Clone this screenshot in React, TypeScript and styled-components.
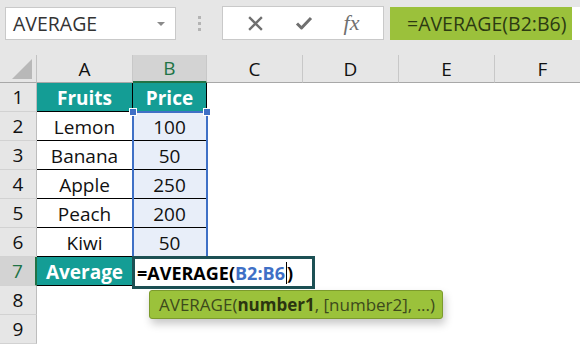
import React from "react";
import styled, { createGlobalStyle } from "styled-components";

const Global = createGlobalStyle`
  html, body { margin: 0; padding: 0; background: #fff; }
  body { width: 580px; height: 344px; overflow: hidden; font-family: "Open Sans", "Noto Sans", sans-serif; }
`;

const Page = styled.div`
  width: 580px;
  height: 344px;
  overflow: hidden;
  display: flex;
  flex-direction: column;
  background: #fff;
`;

const TopBar = styled.div`
  height: 56px;
  box-sizing: border-box;
  background: #e6e6e6;
  display: flex;
  align-items: flex-start;
  padding: 7px 0 0 5px;
`;

const NameBox = styled.div`
  width: 171px;
  height: 33px;
  box-sizing: border-box;
  background: #fff;
  border: 1px solid #c9c9c9;
  display: flex;
  align-items: center;
  justify-content: space-between;
  padding: 0 10px 0 7px;
  font-size: 19.5px;
  color: #333;
`;

const Caret = styled.span`
  width: 0;
  height: 0;
  border-left: 4px solid transparent;
  border-right: 4px solid transparent;
  border-top: 4px solid #8a8a8a;
`;

const Grip = styled.div`
  width: 46px;
  height: 33px;
  display: flex;
  flex-direction: column;
  align-items: center;
  justify-content: center;
  gap: 3px;
  & > span { width: 3px; height: 3px; background: #b4b4b4; }
`;

const FxBox = styled.div`
  width: 162px;
  height: 34px;
  margin-top: -1px;
  box-sizing: border-box;
  background: #fff;
  border: 1px solid #c9c9c9;
  display: flex;
  align-items: center;
  justify-content: space-around;
  padding: 0 8px;
  margin-right: 6px;
  color: #6f6f6f;
`;

const Fx = styled.span`
  font-family: "Liberation Serif", "DejaVu Serif", serif;
  font-style: italic;
  font-size: 22px;
  color: #707070;
  line-height: 1;
`;

const FormulaBox = styled.div`
  flex: 1;
  height: 33px;
  background: #fff;
  display: flex;
`;

const FormulaHighlight = styled.div`
  width: 182px;
  height: 100%;
  background: #9bc13b;
  color: #2c3a12;
  font-size: 19.5px;
  display: flex;
  align-items: center;
  padding-left: 17px;
  box-sizing: border-box;
  white-space: nowrap;
`;

const Sheet = styled.div`
  position: relative;
  flex: 1;
  display: grid;
  grid-template-columns: 37px 96px 74px 96px 96px 96px 96px;
  grid-template-rows: 28px;
  grid-auto-rows: 29px;
  font-size: 18px;
`;

const ColHead = styled.div<{ $active?: boolean; $corner?: boolean }>`
  box-sizing: border-box;
  background: ${(p) => (p.$active ? "#d3d3d3" : "#e6e6e6")};
  color: ${(p) => (p.$active ? "#217346" : "#111")};
  border-right: 1px solid ${(p) => (p.$corner ? "#c2c2c2" : "#c8c8c8")};
  border-bottom: ${(p) => (p.$active ? "2px solid #217346" : "1px solid #a8a8a8")};
  display: flex;
  align-items: center;
  justify-content: center;
  position: relative;
  font-size: 19px;
`;

const Triangle = styled.span`
  position: absolute;
  right: 4px;
  bottom: 3px;
  width: 0;
  height: 0;
  border-left: 20px solid transparent;
  border-bottom: 20px solid #b8b8b8;
`;

const RowHead = styled.div<{ $active?: boolean }>`
  box-sizing: border-box;
  background: ${(p) => (p.$active ? "#d3d3d3" : "#e6e6e6")};
  color: ${(p) => (p.$active ? "#217346" : "#111")};
  border-bottom: 1px solid #d2d2d2;
  border-right: ${(p) => (p.$active ? "2px solid #217346" : "1px solid #bdbdbd")};
  display: flex;
  align-items: center;
  justify-content: center;
  font-size: 19px;
`;

type Kind = "head" | "text" | "sel" | "blank";

const Cell = styled.div<{ $kind: Kind }>`
  box-sizing: border-box;
  display: flex;
  align-items: center;
  justify-content: center;
  white-space: nowrap;
  font-size: 19px;
  padding-top: 1px;
  color: #111;
  background: ${(p) =>
    p.$kind === "head" ? "#149d95" : p.$kind === "sel" ? "#e8eef9" : "#fff"};
  font-weight: ${(p) => (p.$kind === "head" ? 700 : 400)};
  ${(p) => p.$kind === "head" && "color: #fff;"}
  ${(p) =>
    p.$kind !== "blank" &&
    "border-right: 1px solid #000; border-bottom: 1px solid #000;"}
`;

const Selection = styled.div`
  position: absolute;
  left: 132px;
  top: 56px;
  width: 76px;
  height: 147px;
  box-sizing: border-box;
  border: 2px solid #3f70c6;
  pointer-events: none;
`;

const Handle = styled.span<{ $side: "left" | "right" }>`
  position: absolute;
  top: -5px;
  ${(p) => (p.$side === "left" ? "left: -5px;" : "right: -5px;")}
  width: 6px;
  height: 6px;
  background: #3f70c6;
  border: 1px solid #fff;
`;

const EditBox = styled.div`
  position: absolute;
  left: 132px;
  top: 201px;
  width: 183px;
  height: 33px;
  box-sizing: border-box;
  border: 3px solid #1c5054;
  background: #fff;
  display: flex;
  align-items: center;
  padding-left: 2px;
  font-size: 18px;
  font-weight: 700;
  color: #000;
  white-space: nowrap;
`;

const Ref = styled.span`
  color: #3f70c6;
`;

const Caret2 = styled.span`
  display: inline-block;
  width: 1px;
  height: 22px;
  background: #000;
  margin: 0 0 0 1px;
`;

const Tip = styled.div`
  position: absolute;
  left: 149px;
  top: 235px;
  width: 294px;
  height: 29px;
  box-sizing: border-box;
  background: #9bc23b;
  border: 1px solid #7c9b2c;
  border-radius: 3px;
  box-shadow: 2px 5px 9px rgba(0, 0, 0, 0.22);
  display: flex;
  align-items: center;
  padding-left: 9px;
  font-size: 17px;
  color: #3d4a1c;
  white-space: nowrap;
  & b { color: #2b3510; font-weight: 700; }
`;

const data: [string, string][] = [
  ["Lemon", "100"],
  ["Banana", "50"],
  ["Apple", "250"],
  ["Peach", "200"],
  ["Kiwi", "50"],
];

const cols = ["A", "B", "C", "D", "E", "F"];

export default function App() {
  const rows: React.ReactNode[] = [];
  rows.push(
    <React.Fragment key="r1">
      <RowHead>1</RowHead>
      <Cell $kind="head">Fruits</Cell>
      <Cell $kind="head">Price</Cell>
      {[0, 1, 2, 3].map((i) => (
        <Cell key={i} $kind="blank" />
      ))}
    </React.Fragment>
  );
  data.forEach(([f, p], i) => {
    rows.push(
      <React.Fragment key={f}>
        <RowHead>{i + 2}</RowHead>
        <Cell $kind="text">{f}</Cell>
        <Cell $kind="sel">{p}</Cell>
        {[0, 1, 2, 3].map((j) => (
          <Cell key={j} $kind="blank" />
        ))}
      </React.Fragment>
    );
  });
  rows.push(
    <React.Fragment key="r7">
      <RowHead $active>7</RowHead>
      <Cell $kind="head">Average</Cell>
      <Cell $kind="blank" />
      {[0, 1, 2, 3].map((j) => (
        <Cell key={j} $kind="blank" />
      ))}
    </React.Fragment>
  );
  [8, 9].forEach((n) =>
    rows.push(
      <React.Fragment key={n}>
        <RowHead>{n}</RowHead>
        {[0, 1, 2, 3, 4, 5].map((j) => (
          <Cell key={j} $kind="blank" />
        ))}
      </React.Fragment>
    )
  );

  return (
    <Page>
      <Global />
      <TopBar>
        <NameBox>
          AVERAGE
          <Caret />
        </NameBox>
        <Grip>
          <span />
          <span />
          <span />
        </Grip>
        <FxBox>
          <svg width="17" height="17" viewBox="0 0 16 16">
            <path d="M2 2 L14 14 M14 2 L2 14" stroke="#6f6f6f" strokeWidth="2.2" fill="none" />
          </svg>
          <svg width="18" height="16" viewBox="0 0 18 16">
            <path d="M2 8.5 L6.5 13 L16 3" stroke="#6f6f6f" strokeWidth="3" fill="none" strokeLinejoin="round" />
          </svg>
          <Fx>fx</Fx>
        </FxBox>
        <FormulaBox>
          <FormulaHighlight>=AVERAGE(B2:B6)</FormulaHighlight>
        </FormulaBox>
      </TopBar>
      <Sheet>
        <ColHead $corner>
          <Triangle />
        </ColHead>
        {cols.map((c) => (
          <ColHead key={c} $active={c === "B"}>
            {c}
          </ColHead>
        ))}
        {rows}
        <Selection>
          <Handle $side="left" />
          <Handle $side="right" />
        </Selection>
        <EditBox>
          =AVERAGE(<Ref>B2:B6</Ref>
          <Caret2 />)
        </EditBox>
        <Tip>
          AVERAGE(<b>number1</b>, [number2], ...)
        </Tip>
      </Sheet>
    </Page>
  );
}
